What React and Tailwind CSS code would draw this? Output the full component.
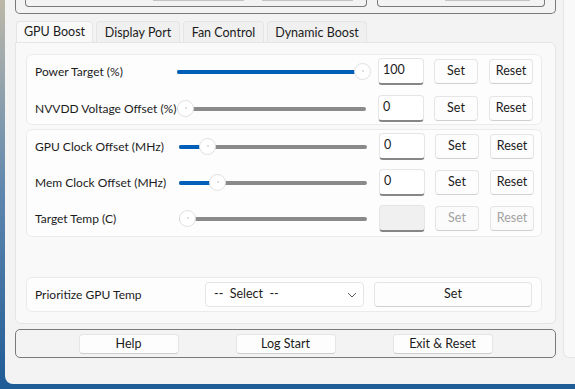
import React from 'react';

const font = { fontFamily: 'Lato, "Liberation Sans", sans-serif' };

const Slider = ({ width, pos, accent = true }) => {
    return (
        <div className="relative h-[18px] shrink-0" style={{ width }}>
            <div className="absolute left-0 right-[5px] top-[7px] h-[4px] rounded-full bg-[#8a8a8a]" />
            {accent && (
                <div className="absolute left-0 top-[7px] h-[4px] rounded-full bg-[#005fb8]" style={{ width: pos + 8 }} />
            )}
            <div
                className="absolute top-0 h-[17px] w-[17px] rounded-full bg-white border border-[#e0e0e0] flex items-center justify-center"
                style={{ left: pos }}
            >
                <div className="w-[2px] h-[2px] rounded-full bg-[#d4d4d4]" />
            </div>
        </div>
    );
};

const Btn = ({ children, disabled, className = '' }) => (
    <div
        className={`h-[25px] flex items-center justify-center rounded-[4px] border border-[#e5e5e5] border-b-[#d0d0d0] text-[12.5px] ${
            disabled ? 'bg-[#fbfbfb] text-[#a3a3a3]' : 'bg-[#fdfdfd] text-[#1b1b1b]'
        } ${className}`}
    >
        {children}
    </div>
);

const ValueBox = ({ value, disabled }) => (
    <div
        className={`w-[46px] h-[27px] shrink-0 rounded-[4px] border border-[#e5e5e5] border-b-2 border-b-[#868686] pl-[4px] pt-[3px] text-[12.5px] leading-[16px] text-[#1b1b1b] ${
            disabled ? 'bg-[#f0f0f0]' : 'bg-white'
        }`}
    >
        {value}
    </div>
);

const Row = ({ label, labelW, sliderW, pos, accent, value, disabled }) => (
    <div className="flex items-center h-[27px]">
        <div className="pt-[1px] text-[12px] text-[#1b1b1b] shrink-0 whitespace-nowrap" style={{ width: labelW }}>
            {label}
        </div>
        <Slider width={sliderW} pos={pos} accent={accent} />
        <div className="ml-[7px]">
            <ValueBox value={value} disabled={disabled} />
        </div>
        <Btn disabled={disabled} className="ml-[10px] w-[44px]">Set</Btn>
        <Btn disabled={disabled} className="ml-[11px] w-[44px]">Reset</Btn>
    </div>
);

const tabs = [
    { name: 'GPU Boost', w: 'w-[77px]', active: true },
    { name: 'Display Port', w: 'w-[84px]' },
    { name: 'Fan Control', w: 'w-[81px]' },
    { name: 'Dynamic Boost', w: 'w-[100px]' },
];

export default function App() {
    return (
        <div
            className="w-[575px] h-[389px] overflow-hidden bg-gradient-to-b from-[#bdb8a8] via-[#5d86ae] to-[#1e5c96]"
            style={font}
        >
            <div className="ml-[5px] h-[384px] rounded-bl-[8px] bg-[#f3f3f3] flex">
                <div className="ml-[10px] w-[541px] flex flex-col">
                    {/* top frame (scrolled off) */}
                    <div className="h-[14px] border-x border-b border-[#7a7a7a] rounded-b-[5px] flex">
                        <div className="ml-[9px] w-[342px] h-[7px] border-x border-b border-[#7a7a7a] rounded-b-[4px] flex">
                            <div className="ml-[127px] w-[91px] h-[1px] bg-[#c4c4c4]" />
                            <div className="ml-[18px] w-[91px] h-[1px] bg-[#c4c4c4]" />
                        </div>
                        <div className="ml-[10px] w-[168px] h-[7px] border-x border-b border-[#7a7a7a] rounded-b-[4px] flex">
                            <div className="ml-[67px] w-[85px] h-[1px] bg-[#c4c4c4]" />
                        </div>
                    </div>

                    {/* tabs */}
                    <div className="mt-[7px] ml-[1px] flex gap-[3px]">
                        {tabs.map((t) => (
                            <div
                                key={t.name}
                                className={`${t.w} h-[21px] rounded-t-[4px] border border-b-0 border-[#e5e5e5] flex items-center justify-center text-[12.5px] text-[#1b1b1b] ${
                                    t.active ? 'bg-[#f9f9f9] pt-[1px]' : 'bg-[#f0f0f0] pt-[3px]'
                                }`}
                            >
                                {t.name}
                            </div>
                        ))}
                    </div>

                    {/* panel */}
                    <div className="h-[282px] rounded-[6px] rounded-tl-none border border-[#e5e5e5] bg-[#f9f9f9] pl-[10px] pr-[13px] pt-[11px] flex flex-col">
                        <div className="h-[71px] rounded-[6px] border border-[#ebebeb] bg-[#fdfdfd] pl-[8px] pt-[3px] flex flex-col gap-[10px]">
                            <Row label="Power Target (%)" labelW={142} sliderW={194} pos={177} accent value="100" />
                            <Row label="NVVDD Voltage Offset (%)" labelW={142} sliderW={194} pos={0} accent={false} value="0" />
                        </div>
                        <div className="mt-[4px] h-[108px] rounded-[6px] border border-[#ebebeb] bg-[#fdfdfd] pl-[8px] pt-[3px] flex flex-col gap-[9px]">
                            <Row label="GPU Clock Offset (MHz)" labelW={144} sliderW={193} pos={20} accent value="0" />
                            <Row label="Mem Clock Offset (MHz)" labelW={144} sliderW={193} pos={30} accent value="0" />
                            <Row label="Target Temp (C)" labelW={144} sliderW={193} pos={0} accent={false} value="" disabled />
                        </div>
                        <div className="mt-[40px] h-[35px] rounded-[6px] border border-[#ebebeb] bg-[#fdfdfd] pl-[8px] flex items-center">
                            <div className="w-[170px] pt-[1px] text-[12px] text-[#1b1b1b]">Prioritize GPU Temp</div>
                            <div className="w-[159px] h-[25px] rounded-[4px] border border-[#e5e5e5] bg-white flex items-center pl-[8px] pr-[6px] text-[12.5px] text-[#1b1b1b]">
                                <span className="flex-1 whitespace-pre">--  Select  --</span>
                                <svg width="10" height="6" viewBox="0 0 10 6" fill="none">
                                    <path d="M1 1l4 4 4-4" stroke="#555" strokeWidth="1" />
                                </svg>
                            </div>
                            <Btn className="ml-[10px] w-[158px]">Set</Btn>
                        </div>
                    </div>

                    {/* bottom frame */}
                    <div className="mt-[5px] h-[29px] rounded-[5px] border border-[#7a7a7a] flex items-center justify-center gap-[57px]">
                        {['Help', 'Log Start', 'Exit & Reset'].map((b) => (
                            <div
                                key={b}
                                className="w-[100px] h-[20px] pt-[1px] rounded-[4px] border border-[#e5e5e5] border-b-[#cdcdcd] bg-[#fdfdfd] flex items-center justify-center text-[12.5px] text-[#1b1b1b]"
                            >
                                {b}
                            </div>
                        ))}
                    </div>
                </div>

                {/* right side panel */}
                <div className="ml-[7px] flex-1 h-[358px] rounded-bl-[6px] border-l border-b border-[#e5e5e5] bg-[#f9f9f9]" />
            </div>
        </div>
    );
}
